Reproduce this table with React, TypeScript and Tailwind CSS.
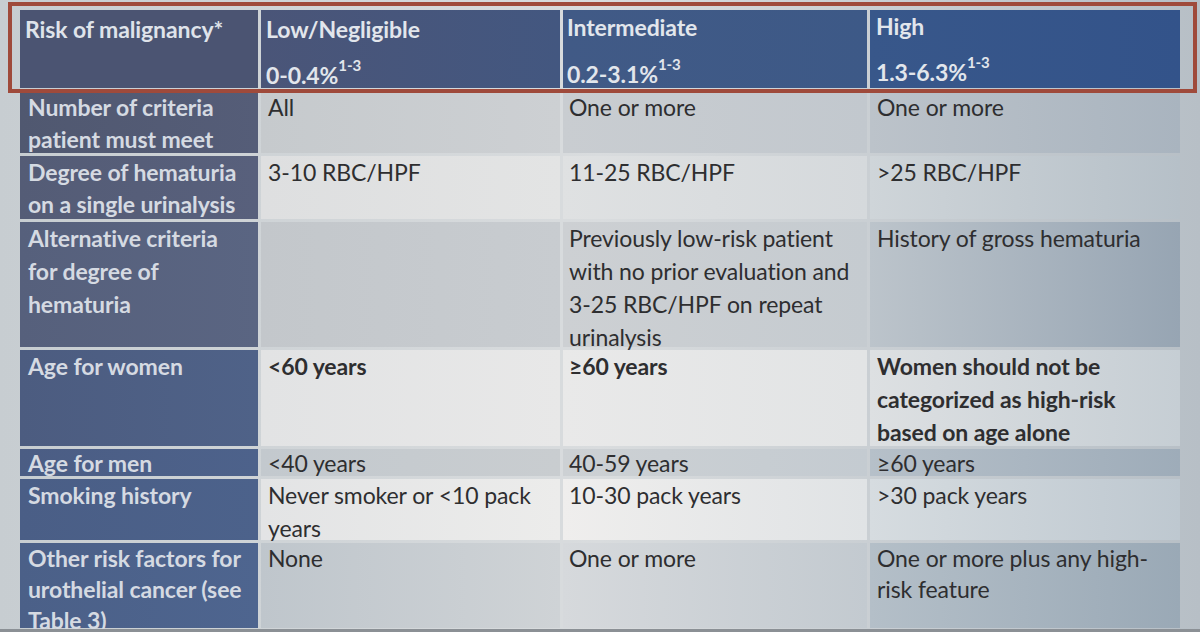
import React from "react";

const font = { fontFamily: "Lato, 'Open Sans', 'Liberation Sans', sans-serif" };

function Sup() {
  return <sup className="text-[15px] relative -top-[4px] align-super leading-none">1-3</sup>;
}

type Cell = { text: React.ReactNode; bold?: boolean };

const rows: { label: string[]; cells: Cell[]; lab: string; bgs: string[]; lh: string }[] = [
  {
    label: ["Number of criteria", "patient must meet"],
    cells: [{ text: "All" }, { text: "One or more" }, { text: "One or more" }],
    lab: "bg-linear-to-r from-[#505870] to-[#555d78]",
    lh: "leading-[32px]",
    bgs: [
      "bg-linear-to-r from-[#c6cacd] to-[#cdd0d3]",
      "bg-linear-to-r from-[#c9cdd1] to-[#c2c8ce]",
      "bg-linear-to-r from-[#bcc3ca] to-[#a9b4bf]",
    ],
  },
  {
    label: ["Degree of hematuria", "on a single urinalysis"],
    cells: [{ text: "3-10 RBC/HPF" }, { text: "11-25 RBC/HPF" }, { text: ">25 RBC/HPF" }],
    lab: "bg-linear-to-r from-[#545c76] to-[#58607c]",
    lh: "leading-[32px]",
    bgs: [
      "bg-linear-to-r from-[#dedfe0] to-[#e3e4e4]",
      "bg-linear-to-r from-[#dfe1e2] to-[#d5d9dc]",
      "bg-linear-to-r from-[#cfd5d9] to-[#b6c0c8]",
    ],
  },
  {
    label: ["Alternative criteria", "for degree of", "hematuria"],
    cells: [
      { text: "" },
      { text: "Previously low-risk patient with no prior evaluation and 3-25 RBC/HPF on repeat urinalysis" },
      { text: "History of gross hematuria" },
    ],
    lab: "bg-linear-to-r from-[#56607c] to-[#5a6582]",
    lh: "leading-[33px]",
    bgs: [
      "bg-linear-to-r from-[#c3c7cb] to-[#c8ccd0]",
      "bg-linear-to-r from-[#cdd0d3] to-[#c5cbd0]",
      "bg-linear-to-r from-[#bcc4cb] to-[#97a5b3]",
    ],
  },
  {
    label: ["Age for women"],
    cells: [
      { text: "<60 years", bold: true },
      { text: "≥60 years", bold: true },
      { text: "Women should not be categorized as high-risk based on age alone", bold: true },
    ],
    lab: "bg-linear-to-r from-[#4c5c80] to-[#4f6288]",
    lh: "leading-[33px]",
    bgs: [
      "bg-linear-to-r from-[#e2e3e4] to-[#e8e8e8]",
      "bg-linear-to-r from-[#e9e9e9] to-[#e2e4e5]",
      "bg-linear-to-r from-[#dde0e2] to-[#c6ced4]",
    ],
  },
  {
    label: ["Age for men"],
    cells: [{ text: "<40 years" }, { text: "40-59 years" }, { text: "≥60 years" }],
    lab: "bg-linear-to-r from-[#4b5d84] to-[#4d628b]",
    lh: "leading-[28px]",
    bgs: [
      "bg-linear-to-r from-[#c3c9ce] to-[#c9cdd0]",
      "bg-linear-to-r from-[#cdd1d4] to-[#c4cbd1]",
      "bg-linear-to-r from-[#b6c0c9] to-[#9eacb9]",
    ],
  },
  {
    label: ["Smoking history"],
    cells: [
      { text: "Never smoker or <10 pack years" },
      { text: "10-30 pack years" },
      { text: ">30 pack years" },
    ],
    lab: "bg-linear-to-r from-[#4a5e86] to-[#4c628b]",
    lh: "leading-[33px]",
    bgs: [
      "bg-linear-to-r from-[#e3e4e5] to-[#ececeb]",
      "bg-linear-to-r from-[#efeeed] to-[#e0e3e5]",
      "bg-linear-to-r from-[#d6dce0] to-[#bec8d0]",
    ],
  },
  {
    label: ["Other risk factors for", "urothelial cancer (see", "Table 3)"],
    cells: [
      { text: "None" },
      { text: "One or more" },
      { text: "One or more plus any high-risk feature" },
    ],
    lab: "bg-linear-to-r from-[#4b6088] to-[#4e658f]",
    lh: "leading-[31px]",
    bgs: [
      "bg-linear-to-r from-[#bfc6cc] to-[#cfd3d6]",
      "bg-linear-to-r from-[#d6d9dc] to-[#c3cad0]",
      "bg-linear-to-r from-[#b4bfc8] to-[#9aa9b6]",
    ],
  },
];

export default function App() {
  return (
    <div
      className="relative w-[1200px] h-[632px] overflow-hidden bg-linear-to-r from-[#c7cdd1] via-[#d9dcde] to-[#b7bfc6]"
      style={font}
    >
      <div className="flex flex-col h-full">
        <div className="flex-1 min-h-0 pt-[10px] pl-[20px] pr-[20px]">
          <div className="grid grid-cols-[238px_299px_304px_310px] grid-rows-[78px_62px_63px_125px_96px_27px_61px_85px] gap-[3px] text-[23px] leading-[33px] tracking-[-0.1px]">
            {/* header */}
            <div className="bg-[#4b5472] text-[#dfe3ea] font-bold px-[5px] pt-[3px]">
              Risk of malignancy*
            </div>
            <div className="bg-linear-to-r from-[#4a5578] to-[#435780] text-[#e2e6ec] font-bold px-[5px] pt-[3px] flex flex-col justify-between">
              <span>Low/Negligible</span>
              <span className="leading-[26px]">
                0-0.4%<Sup />
              </span>
            </div>
            <div className="bg-linear-to-r from-[#415a86] to-[#3d5987] text-[#e2e6ec] font-bold px-[4px] pt-[1px] flex flex-col justify-between">
              <span>Intermediate</span>
              <span className="leading-[28px]">
                0.2-3.1%<Sup />
              </span>
            </div>
            <div className="bg-linear-to-r from-[#38578a] to-[#33538a] text-[#e2e6ec] font-bold px-[6px] pt-[0px] pb-[1px] flex flex-col justify-between">
              <span>High</span>
              <span className="leading-[30px]">
                1.3-6.3%<Sup />
              </span>
            </div>

            {rows.map((r, i) => (
              <React.Fragment key={i}>
                <div className={`${r.lab} ${r.lh} text-[#d5dae2] font-bold px-[8px] whitespace-nowrap`}>
                  {r.label.map((l, j) => (
                    <div key={j}>{l}</div>
                  ))}
                </div>
                {r.cells.map((c, j) => (
                  <div
                    key={j}
                    className={`${r.bgs[j]} ${r.lh} text-[#2e2e30] ${c.bold ? "font-bold" : ""} ${
                      j === 0 ? "pl-[7px] pr-[10px]" : j === 1 ? "pl-[6px] pr-[6px]" : "pl-[7px] pr-[16px]"
                    }`}
                  >
                    {c.text}
                  </div>
                ))}
              </React.Fragment>
            ))}
          </div>
        </div>
        <div className="h-[3px] bg-[#8b9095]" />
      </div>
      <div className="absolute left-[8px] top-[2px] w-[1189px] h-[91px] border-[4px] border-[#9f4a3b] pointer-events-none" />
    </div>
  );
}
